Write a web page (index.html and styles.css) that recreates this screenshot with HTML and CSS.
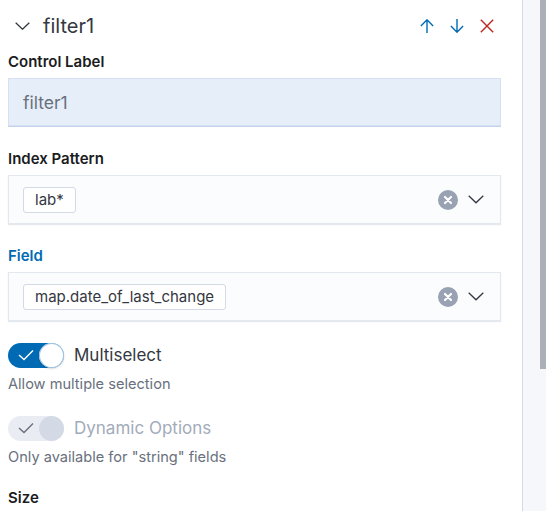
FILE: index.html
```html
<!DOCTYPE html>
<html>
<head>
<meta charset="utf-8">
<link rel="stylesheet" href="styles.css">
</head>
<body>
<div class="layout">
  <div class="panel">
    <div class="header">
      <svg class="chev" width="15" height="8" viewBox="0 0 15 8"><path d="M0.7 0.7 L7.5 7.2 L14.3 0.7" fill="none" stroke="#343741" stroke-width="1.3"/></svg>
      <span class="title">filter1</span>
      <div class="actions">
        <svg width="14" height="14" viewBox="0 0 14 14"><path d="M7 0.8 V14 M0.9 6.9 L7 0.8 L13.1 6.9" fill="none" stroke="#006bb4" stroke-width="1.4"/></svg>
        <svg width="14" height="14" viewBox="0 0 14 14"><path d="M7 0 V13.2 M0.9 7.1 L7 13.2 L13.1 7.1" fill="none" stroke="#006bb4" stroke-width="1.4"/></svg>
        <svg width="14" height="14" viewBox="0 0 14 14"><path d="M0.8 0.8 L13.2 13.2 M13.2 0.8 L0.8 13.2" fill="none" stroke="#bd271e" stroke-width="1.4"/></svg>
      </div>
    </div>

    <div class="row">
      <div class="label">Control Label</div>
      <div class="field-input">filter1</div>
    </div>

    <div class="row">
      <div class="label">Index Pattern</div>
      <div class="combo">
        <span class="pill">lab*</span>
        <div class="combo-icons">
          <svg width="20" height="20" viewBox="0 0 20 20"><circle cx="10" cy="10" r="10" fill="#98a2b3"/><path d="M7 7 L13 13 M13 7 L7 13" stroke="#fff" stroke-width="2.2" stroke-linecap="round"/></svg>
          <svg width="16" height="9" viewBox="0 0 16 9"><path d="M0.7 0.7 L8 7.8 L15.3 0.7" fill="none" stroke="#343741" stroke-width="1.3"/></svg>
        </div>
      </div>
    </div>

    <div class="row">
      <div class="label active">Field</div>
      <div class="combo">
        <span class="pill">map.date_of_last_change</span>
        <div class="combo-icons">
          <svg width="20" height="20" viewBox="0 0 20 20"><circle cx="10" cy="10" r="10" fill="#98a2b3"/><path d="M7 7 L13 13 M13 7 L7 13" stroke="#fff" stroke-width="2.2" stroke-linecap="round"/></svg>
          <svg width="16" height="9" viewBox="0 0 16 9"><path d="M0.7 0.7 L8 7.8 L15.3 0.7" fill="none" stroke="#343741" stroke-width="1.3"/></svg>
        </div>
      </div>
    </div>

    <div class="switch-row first">
      <span class="switch on">
        <svg class="check" width="16" height="12" viewBox="0 0 16 12"><path d="M1 6 L6 10.5 L15 1.5" fill="none" stroke="#fff" stroke-width="1.4"/></svg>
        <span class="thumb"></span>
      </span>
      <span class="switch-label">Multiselect</span>
    </div>
    <div class="help">Allow multiple selection</div>

    <div class="switch-row">
      <span class="switch off">
        <svg class="check" width="16" height="12" viewBox="0 0 16 12"><path d="M1 6 L6 10.5 L15 1.5" fill="none" stroke="#69707d" stroke-width="1.4"/></svg>
        <span class="thumb"></span>
      </span>
      <span class="switch-label disabled">Dynamic Options</span>
    </div>
    <div class="help">Only available for "string" fields</div>

    <div class="label size">Size</div>
  </div>
  <div class="gutter"><div class="thumb-bar"></div></div>
</div>
</body>
</html>
```

FILE: styles.css
```css
* { box-sizing: border-box; }
html, body { margin: 0; padding: 0; }
body {
  background: #f5f7fa;
  font-family: Inter, "Noto Sans", sans-serif;
  color: #343741;
  height: 511px;
  overflow: hidden;
}
.layout {
  display: flex;
  height: 511px;
}
.panel {
  width: 523px;
  flex: none;
  background: #fff;
  border-right: 1px solid #d3dae6;
  padding: 10px 21px 0 8px;
}
.gutter {
  flex: 1;
  display: flex;
  justify-content: flex-end;
}
.thumb-bar {
  width: 6px;
  height: 369px;
  background: #abafb8;
}
.header {
  display: flex;
  align-items: center;
  height: 32px;
}
.chev { margin-left: 7px; flex: none; }
.title {
  margin-left: 13px;
  font-size: 20px;
  line-height: 32px;
  color: #343741;
}
.actions {
  margin-left: auto;
  margin-right: 7px;
  display: flex;
  gap: 16px;
  align-items: center;
}
.row { margin-top: 10px; }
.row + .row { margin-top: 22px; }
.label {
  font-size: 15px;
  font-weight: 600;
  line-height: 20px;
  color: #1a1c21;
}
.label.active { color: #006bb4; }
.field-input {
  margin-top: 6px;
  height: 49px;
  background: #e6eefa;
  border-bottom: 1px solid #c5d2ec;
  box-shadow: inset 0 0 0 1px #d6e0f2;
  padding: 13px 15px 0;
  font-size: 17.5px;
  line-height: 24px;
  color: #69707d;
}
.combo {
  margin-top: 6px;
  height: 49px;
  background: #fbfcfd;
  box-shadow: inset 0 0 0 1px #e3e7ef, 0 1px 1px rgba(152,162,179,0.25);
  display: flex;
  align-items: center;
  padding: 0 17px 0 15px;
}
.pill {
  display: inline-block;
  height: 26px;
  border: 1px solid #d3dae6;
  border-radius: 3px;
  background: #fff;
  padding: 0 11px;
  font-size: 15px;
  line-height: 24px;
  color: #343741;
}
.combo-icons {
  margin-left: auto;
  display: flex;
  align-items: center;
  gap: 10px;
}
.switch-row {
  display: flex;
  align-items: center;
  margin-top: 21px;
}
.switch {
  width: 56px;
  height: 25px;
  border-radius: 13px;
  flex: none;
  display: flex;
  align-items: center;
}
.switch.on { background: #006bb4; }
.switch.off { background: #e9edf3; }
.check { margin-left: 10px; }
.thumb {
  margin-left: auto;
  width: 25px;
  height: 25px;
  border-radius: 50%;
}
.switch.on .thumb {
  background: #fff;
  box-shadow: 0 0 0 1px #98c0e0 inset, 0 1px 2px rgba(0,0,0,0.15);
}
.switch.off .thumb { background: #d3dae6; }
.switch-label {
  margin-left: 10px;
  font-size: 17px;
  line-height: 26px;
  color: #343741;
}
.switch-label.disabled { color: #a2abba; }
.help {
  margin-top: 6px;
  font-size: 14.6px;
  line-height: 20px;
  color: #69707d;
}
.label.size { margin-top: 21px; }
```
